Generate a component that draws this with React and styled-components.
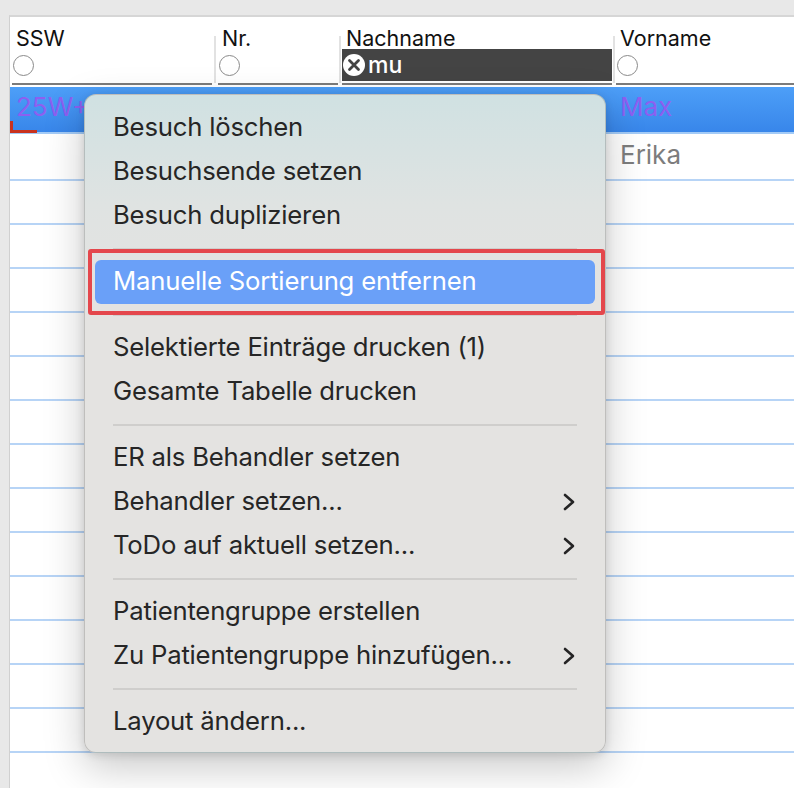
import React from "react";
import styled, { createGlobalStyle } from "styled-components";

const GlobalStyle = createGlobalStyle`
  html, body {
    margin: 0;
    padding: 0;
    background: #e8e8e8;
    overflow: hidden;
  }
  body {
    font-family: Inter, "Liberation Sans", Arial, sans-serif;
    -webkit-font-smoothing: antialiased;
  }
`;

const Page = styled.div`
  position: relative;
  width: 794px;
  height: 788px;
  padding: 15px 0 0 9px;
  box-sizing: border-box;
`;

const Panel = styled.div`
  background: #fff;
  border-top: 2px solid #d6d6d6;
  border-left: 1px solid #d0d0d0;
  height: 100%;
  box-sizing: border-box;
  padding-left: 2px;
`;

const Header = styled.div`
  display: flex;
  height: 68px;
`;

const HeadCell = styled.div`
  width: ${(p) => p.$w}px;
  flex: ${(p) => (p.$grow ? "1" : "none")};
  display: flex;
  flex-direction: column;
  border-bottom: 2px solid #7b7b7b;
  box-sizing: border-box;
`;

const HeadTitle = styled.div`
  height: 32px;
  padding: 9px 0 0 4px;
  box-sizing: border-box;
  font-size: 21.5px;
  line-height: 25px;
  color: #111;
  white-space: nowrap;
`;

const FilterRow = styled.div`
  height: 32px;
  display: flex;
  align-items: center;
  padding-left: 1px;
  background: ${(p) => (p.$active ? "#444" : "transparent")};
  color: #fff;
  font-size: 23px;
  font-weight: 500;
  gap: 3px;
`;

const Radio = styled.span`
  width: 21px;
  height: 21px;
  border-radius: 50%;
  border: 1px solid #8a8a8a;
  background: #fff;
  box-sizing: border-box;
`;

const ColSep = styled.div`
  width: ${(p) => p.$w}px;
  flex: none;
  display: flex;
  justify-content: center;
  padding-top: 19px;
  padding-bottom: 2px;
  box-sizing: border-box;

  &::after {
    content: "";
    width: 2px;
    background: #e2e2e2;
  }
`;

const Body = styled.div`
  margin-left: -2px;
  padding-top: 2px;
`;

const Row = styled.div`
  position: relative;
  display: flex;
  height: ${(p) => p.$h}px;
  box-sizing: border-box;
  border-bottom: 2px solid ${(p) => (p.$selected ? "#a3cbf7" : "#b7d4f6")};
  background: ${(p) =>
    p.$selected ? "linear-gradient(180deg, #4d9ff8 0%, #3886ea 100%)" : "#fff"};
  font-size: 26px;
  line-height: 36px;
`;

const Cell = styled.div`
  width: ${(p) => p.$w}px;
  flex: ${(p) => (p.$grow ? "1" : "none")};
  padding: ${(p) => p.$pt}px 0 0 ${(p) => p.$pl}px;
  box-sizing: border-box;
  color: ${(p) => p.$color};
  white-space: nowrap;
`;

const Marker = styled.span`
  position: absolute;
  left: 0;
  bottom: -1px;
  width: 27px;
  height: 12px;
  border-left: 3px solid #c9321e;
  border-bottom: 3px solid #c9321e;
  box-sizing: border-box;
`;

const Menu = styled.div`
  position: absolute;
  left: 84px;
  top: 94px;
  width: 522px;
  padding: 11px 10px 8px;
  box-sizing: border-box;
  border-radius: 12px;
  border: 1px solid rgba(0, 0, 0, 0.16);
  background: linear-gradient(180deg, #d0e1e2 0px, #dfe3e2 110px, #e4e3e1 200px, #e4e3e1 100%);
  box-shadow: 0 14px 40px rgba(0, 0, 0, 0.22), 0 2px 8px rgba(0, 0, 0, 0.12);
`;

const Item = styled.div`
  height: 44px;
  display: flex;
  align-items: center;
  justify-content: space-between;
  padding: 0 20px 3px 18px;
  box-sizing: border-box;
  border-radius: 6px;
  font-size: 25.7px;
  letter-spacing: -0.2px;
  color: ${(p) => (p.$hover ? "#fff" : "#262626")};
  background: ${(p) => (p.$hover ? "#6aa0f8" : "transparent")};
  white-space: nowrap;

  svg {
    margin-top: 3px;
  }
`;

const Separator = styled.div`
  height: 22px;
  display: flex;
  align-items: center;
  padding: 0 18px;

  &::after {
    content: "";
    flex: 1;
    height: 2px;
    background: #cfcecc;
  }
`;

const Highlight = styled.div`
  position: absolute;
  left: 3px;
  top: 154px;
  width: 517px;
  height: 66px;
  border: 4px solid #e4474c;
  border-radius: 3px;
  box-sizing: border-box;
`;

const Chevron = () => (
  <svg width="12" height="18" viewBox="0 0 12 18">
    <path d="M2 2 L10 9 L2 16" fill="none" stroke="#242424" strokeWidth="2.6" strokeLinecap="round" strokeLinejoin="round" />
  </svg>
);

const ClearIcon = () => (
  <svg width="22" height="22" viewBox="0 0 22 22">
    <circle cx="11" cy="11" r="11" fill="#fff" />
    <path d="M6.5 6.5 L15.5 15.5 M15.5 6.5 L6.5 15.5" stroke="#444" strokeWidth="2.8" strokeLinecap="round" />
  </svg>
);

const columns = [
  { title: "SSW", w: 200 },
  { title: "Nr.", w: 120 },
  { title: "Nachname", w: 270, filter: "mu" },
  { title: "Vorname", grow: true },
];

const seps = [6, 4, 4];

const menuItems = [
  { label: "Besuch löschen" },
  { label: "Besuchsende setzen" },
  { label: "Besuch duplizieren" },
  { sep: true },
  { label: "Manuelle Sortierung entfernen", hover: true },
  { sep: true },
  { label: "Selektierte Einträge drucken (1)" },
  { label: "Gesamte Tabelle drucken" },
  { sep: true },
  { label: "ER als Behandler setzen" },
  { label: "Behandler setzen...", sub: true },
  { label: "ToDo auf aktuell setzen...", sub: true },
  { sep: true },
  { label: "Patientengruppe erstellen" },
  { label: "Zu Patientengruppe hinzufügen...", sub: true },
  { sep: true },
  { label: "Layout ändern..." },
];

const emptyRows = Array.from({ length: 14 }, (_, i) => i);

export default function App() {
  return (
    <>
      <GlobalStyle />
      <Page>
        <Panel>
          <Header>
            {columns.map((c, i) => (
              <React.Fragment key={c.title}>
                <HeadCell $w={c.w} $grow={c.grow}>
                  <HeadTitle>{c.title}</HeadTitle>
                  {c.filter ? (
                    <FilterRow $active>
                      <ClearIcon />
                      {c.filter}
                    </FilterRow>
                  ) : (
                    <FilterRow>
                      <Radio />
                    </FilterRow>
                  )}
                </HeadCell>
                {i < seps.length && <ColSep $w={seps[i]} />}
              </React.Fragment>
            ))}
          </Header>
          <Body>
            <Row $selected $h={47}>
              <Cell $w={610} $pt={2} $pl={6} $color="#8d5ff0">
                25W+
              </Cell>
              <Cell $grow $pt={2} $pl={0} $color="#8d5ff0">
                Max
              </Cell>
              <Marker />
            </Row>
            <Row $h={47}>
              <Cell $w={610} $pt={3} $pl={6} $color="#7d7d7d" />
              <Cell $grow $pt={3} $pl={0} $color="#7d7d7d">
                Erika
              </Cell>
            </Row>
            {emptyRows.map((r) => (
              <Row key={r} $h={44} />
            ))}
          </Body>
        </Panel>
        <Menu>
          {menuItems.map((m, i) =>
            m.sep ? (
              <Separator key={i} />
            ) : (
              <Item key={i} $hover={m.hover}>
                <span>{m.label}</span>
                {m.sub && <Chevron />}
              </Item>
            )
          )}
          <Highlight />
        </Menu>
      </Page>
    </>
  );
}
